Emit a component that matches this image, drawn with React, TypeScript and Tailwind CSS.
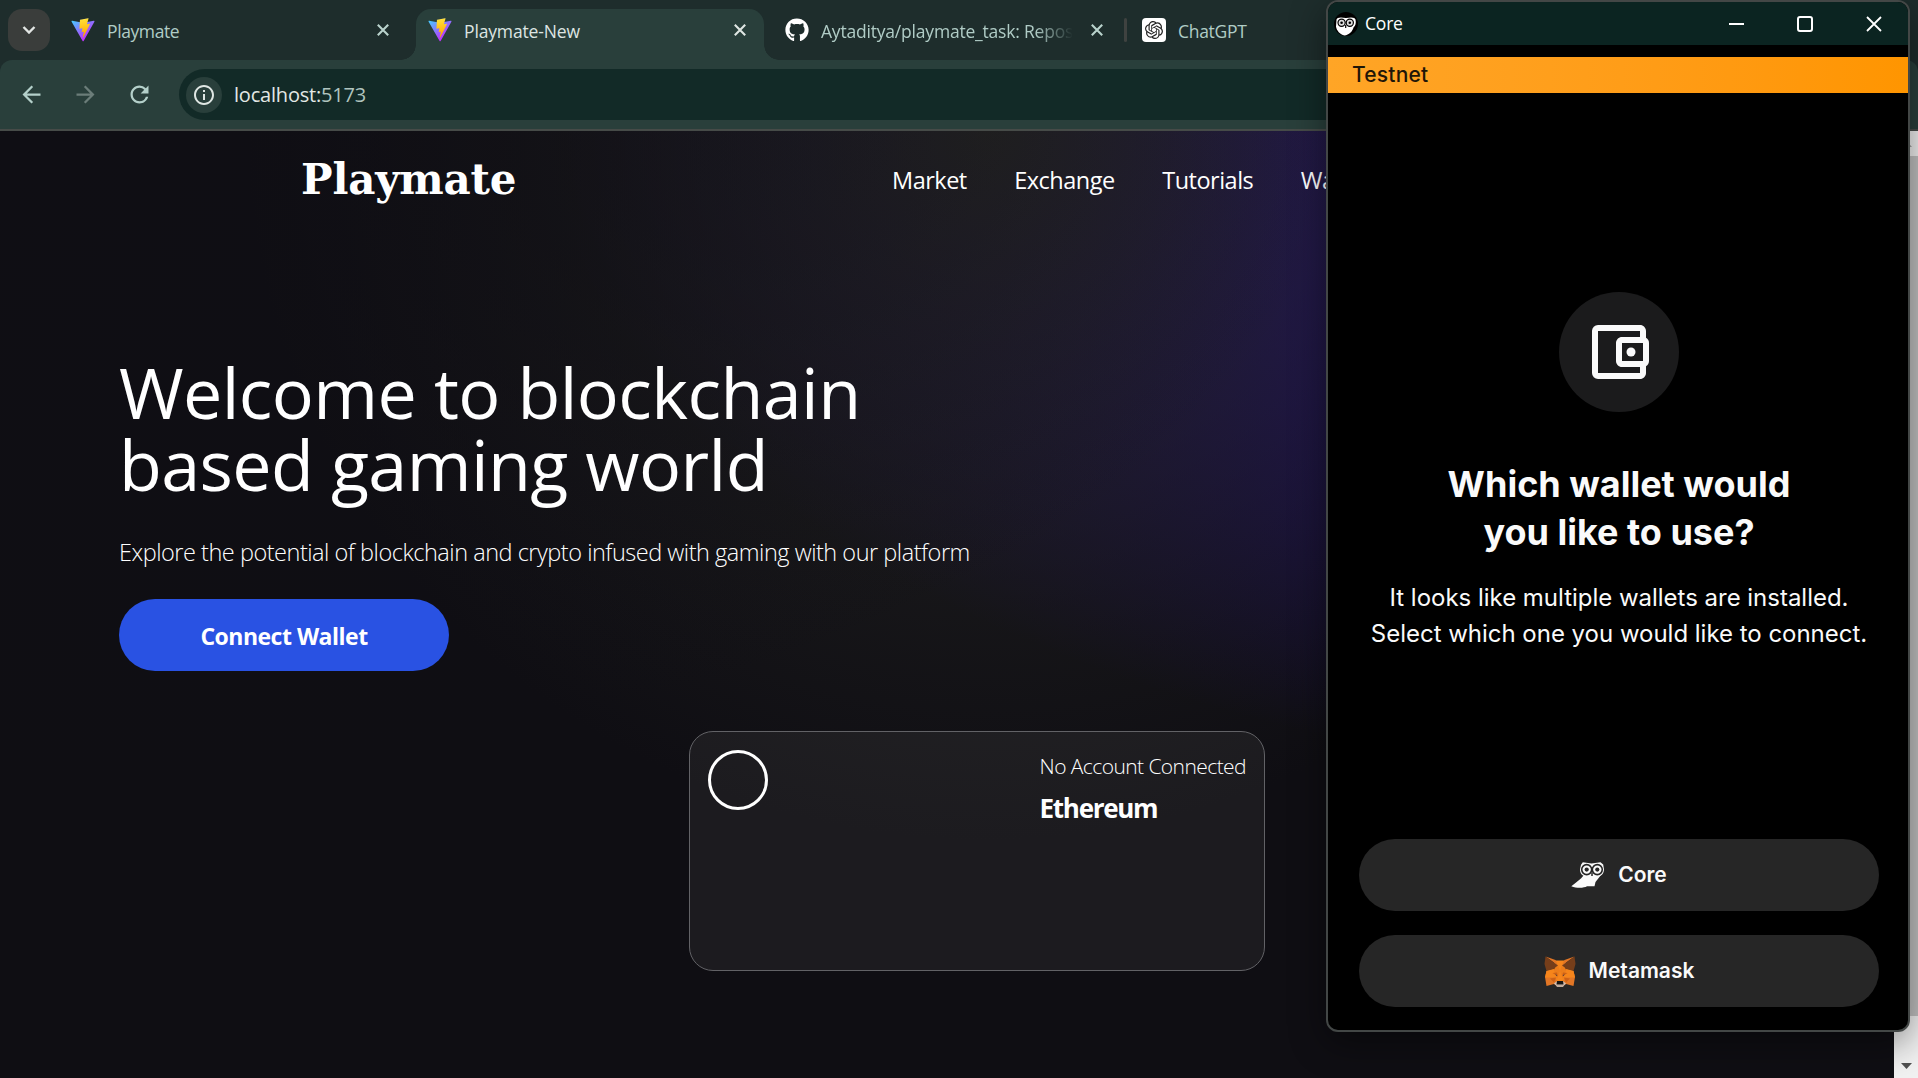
import type { ReactNode } from 'react';
import { MdArrowBack, MdArrowForward, MdInfoOutline, MdOutlineAccountBalanceWallet, MdRefresh } from 'react-icons/md';
import { FaGithub } from 'react-icons/fa';
import { SiOpenai } from 'react-icons/si';

function ViteIcon({ id }: { id: string }) {
  return (
    <svg className="size-6 shrink-0" viewBox="0 0 410 404" fill="none">
      <defs>
        <linearGradient id={`${id}-a`} x1="6" y1="33" x2="235" y2="344" gradientUnits="userSpaceOnUse">
          <stop stopColor="#41D1FF" />
          <stop offset="1" stopColor="#BD34FE" />
        </linearGradient>
        <linearGradient id={`${id}-b`} x1="194.6" y1="8.8" x2="236" y2="293" gradientUnits="userSpaceOnUse">
          <stop stopColor="#FFEA83" />
          <stop offset="0.083" stopColor="#FFDD35" />
          <stop offset="1" stopColor="#FFA800" />
        </linearGradient>
      </defs>
      <path
        fill={`url(#${id}-a)`}
        d="M399.641 59.525L215.643 388.545C211.844 395.338 202.084 395.378 198.228 388.618L10.582 59.556C6.381 52.19 12.68 43.267 21.028 44.759L205.223 77.682C206.398 77.892 207.601 77.89 208.776 77.676L389.119 44.806C397.439 43.289 403.768 52.143 399.641 59.525Z"
      />
      <path
        fill={`url(#${id}-b)`}
        d="M292.965 1.574L156.801 28.255C154.563 28.694 152.906 30.591 152.771 32.867L144.395 174.33C144.198 177.662 147.258 180.248 150.51 179.498L188.42 170.749C191.967 169.931 195.172 173.055 194.443 176.622L183.18 231.775C182.422 235.487 185.907 238.661 189.532 237.56L212.947 230.446C216.577 229.344 220.065 232.527 219.297 236.242L201.398 322.875C200.278 328.294 207.486 331.249 210.492 326.603L212.5 323.5L323.454 102.072C325.312 98.365 322.108 94.137 318.036 94.923L279.014 102.454C275.347 103.161 272.227 99.746 273.262 96.158L298.731 7.867C299.767 4.273 296.636 0.855 292.965 1.574Z"
      />
    </svg>
  );
}

function CloseGlyph({ className }: { className: string }) {
  return (
    <svg className={`size-3 shrink-0 ${className}`} viewBox="0 0 12 12" stroke="currentColor" strokeWidth="2.1">
      <path d="M0.8 0.8L11.2 11.2M11.2 0.8L0.8 11.2" />
    </svg>
  );
}

function TabLabel({ children, className }: { children: ReactNode; className: string }) {
  return <span className={`mt-[2px] text-[17.5px] leading-6 whitespace-nowrap ${className}`}>{children}</span>;
}

function OwlIcon() {
  return (
    <svg className="h-[26px] w-[34px]" viewBox="0 0 34 26">
      <path fill="#fafafa" d="M12.5 13.5C10 17 5 20.500 0.300 24.200C6 26.400 13 26 16 24.200L23.500 24.200L24.500 20L30 13Z" />
      <path fill="#fafafa" d="M11.800 0.200L20.500 1.400L29.500 0.200L32.200 2.500L33 7.500C32.800 12 30 14.600 26 14.600L15.500 14.600C11.500 14.400 9 11.500 9 7.500L10 2.800Z" />
      <circle cx="15.700" cy="7.600" r="5" fill="none" stroke="#262626" strokeWidth="1.600" />
      <circle cx="26.300" cy="7.600" r="5" fill="none" stroke="#262626" strokeWidth="1.600" />
      <circle cx="15.700" cy="7.600" r="2.100" fill="#262626" />
      <circle cx="26.300" cy="7.600" r="2.100" fill="#262626" />
      <path d="M21 10.500V14" stroke="#262626" strokeWidth="1.500" />
    </svg>
  );
}

function OwlBadge() {
  return (
    <svg className="size-6" viewBox="0 0 24 24">
      <ellipse cx="12" cy="12" rx="12" ry="12" fill="#000" />
      <path fill="#fff" d="M2.500 7.500C3 5.500 6 4.800 12 6C18 4.800 21 5.500 21.500 7.500C22.300 11 21.500 14 19.500 15.500C18.500 19.500 15 23 10.500 23.500C6 22.500 2.500 18.500 2 14.500Z" />
      <circle cx="7.600" cy="10.800" r="3.600" fill="#ddd" stroke="#000" strokeWidth="1.200" />
      <circle cx="15.800" cy="10.800" r="3.600" fill="#ddd" stroke="#000" strokeWidth="1.200" />
      <circle cx="7.600" cy="10.800" r="1.300" fill="#000" />
      <circle cx="15.800" cy="10.800" r="1.300" fill="#000" />
      <path d="M11.700 13V16" stroke="#000" strokeWidth="1.200" />
    </svg>
  );
}

function FoxIcon() {
  return (
    <svg className="h-[31px] w-8" viewBox="0 0 64 62">
      <path fill="#E27625" d="M2 42L5 60L20 56L26 60H38L44 56L59 60L62 42L59 30L32 24L5 30Z" />
      <path fill="#F6851B" d="M20 9H44L41 42L38 52H26L23 42Z" />
      <path fill="#E27625" d="M3 1L28 19L23 8Z" />
      <path fill="#E27625" d="M61 1L36 19L41 8Z" />
      <path fill="#763E1A" d="M3 1L1 16L5 30L19 26L28 19Z" />
      <path fill="#763E1A" d="M61 1L63 16L59 30L45 26L36 19Z" />
      <path fill="#F6851B" d="M5 30L19 26L27 30L24 43L2 43Z" />
      <path fill="#F6851B" d="M59 30L45 26L37 30L40 43L62 43Z" />
      <path fill="#E2761B" d="M19 26L28 19L32 30L26 46Z" opacity="0.500" />
      <path fill="#E2761B" d="M45 26L36 19L32 30L38 46Z" opacity="0.500" />
      <path fill="#CD6116" d="M17 34L26 33L28 41ZM47 34L38 33L36 41Z" />
      <path fill="#233447" d="M22 37L26 38L26 40ZM42 37L38 38L38 40Z" />
      <path fill="#CD6116" d="M12 45L24 43L20 53ZM52 45L40 43L44 53Z" />
      <path fill="#D5BFB2" d="M20 55L25 51H39L44 55L38 61H26Z" />
      <path fill="#161616" d="M26 50H38L39 57H25Z" />
      <path fill="#C0AC9D" d="M24 58H40L38 62H26Z" />
    </svg>
  );
}

function BrowserChrome() {
  return (
    <div className="flex h-[131px] shrink-0 flex-col bg-[#1e2d2c]">
      <div className="flex h-[60px] items-center pl-2">
        <div className="flex size-[42px] items-center justify-center rounded-[14px] bg-[#3a3d3b]">
          <svg className="h-2 w-3.5" viewBox="0 0 14 8" fill="none" stroke="#e3e6e4" strokeWidth="2.400">
            <path d="M1.500 1L7 6.500L12.500 1" />
          </svg>
        </div>
        <div className="flex w-[366px] items-center pr-[27px] pl-[21px]">
          <ViteIcon id="tab1" />
          <TabLabel className="ml-3 flex-1 tracking-[-0.400px] text-[#b0ccc6]">Playmate</TabLabel>
          <CloseGlyph className="text-[#b9d2cc]" />
        </div>
        <div className="relative mt-[9px] flex h-[51px] w-[348px] items-center rounded-t-[15px] bg-[#293f3b] pr-[18px] pb-[9px] pl-3">
          <span className="absolute bottom-0 -left-[15px] size-[15px] bg-[radial-gradient(circle_at_0_0,transparent_14.500px,#293f3b_15px)]" />
          <span className="absolute -right-[15px] bottom-0 size-[15px] bg-[radial-gradient(circle_at_100%_0,transparent_14.500px,#293f3b_15px)]" />
          <ViteIcon id="tab2" />
          <TabLabel className="ml-3 flex-1 tracking-[-0.150px] text-[#dde5e2]">Playmate-New</TabLabel>
          <CloseGlyph className="text-[#dfe6e3]" />
        </div>
        <div className="flex w-[360px] items-center pr-[21px] pl-[21px]">
          <FaGithub className="size-6 shrink-0 text-white" />
          <TabLabel className="ml-3 w-[252px] overflow-hidden tracking-[-0.200px] text-[#b0ccc6] [mask-image:linear-gradient(to_right,black_85%,transparent)]">
            Aytaditya/playmate_task: Repos
          </TabLabel>
          <CloseGlyph className="ml-[18px] text-[#b9d2cc]" />
        </div>
        <span className="h-6 w-[3px] rounded-full bg-[#3f4240]" />
        <span className="ml-[15px] flex size-6 items-center justify-center rounded bg-white">
          <SiOpenai className="size-[18px] text-[#222]" />
        </span>
        <TabLabel className="ml-3 tracking-[-0.300px] text-[#b0ccc6]">ChatGPT</TabLabel>
      </div>
      <div className="flex h-[71px] items-center rounded-t-[12px] border-b-2 border-[#464b48] bg-[#293f3b] pl-[18px] text-[#b4d0ca]">
        <MdArrowBack className="size-[27px]" />
        <MdArrowForward className="ml-[27px] size-[27px] text-[#6b7d79]" />
        <MdRefresh className="ml-[27px] size-[27px]" />
        <div className="ml-[26px] flex h-[51px] flex-1 items-center rounded-l-full bg-[#122a27] pl-[7px]">
          <span className="flex size-9 items-center justify-center rounded-full bg-[#293f3b]">
            <MdInfoOutline className="size-6 text-[#dfe6e3]" />
          </span>
          <span className="ml-3 text-xl tracking-[-0.200px] text-[#e2e8e5]">
            localhost:<span className="text-[#b0c4bf]">5173</span>
          </span>
        </div>
        <div className="w-24" />
      </div>
    </div>
  );
}

function Page() {
  return (
    <div className="flex min-h-0 flex-1">
      <main className="flex-1 bg-[#0f0e13] bg-[radial-gradient(at_0%_0%,#0f0e14_0,transparent_50%),radial-gradient(at_52%_0%,#242423_0,transparent_53%),radial-gradient(at_100%_0%,#2909b3_0,transparent_50%)]">
        <header className="flex h-[98px] items-center pl-[301px] text-white">
          <div className="w-[591px] font-['DejaVu_Serif'] text-[42px] leading-none font-bold tracking-[-0.200px]">Playmate</div>
          <nav className="mt-[2px] flex gap-[47.500px] text-[23.500px] tracking-[-0.500px]">
            <span>Market</span>
            <span>Exchange</span>
            <span>Tutorials</span>
            <span>Wallets</span>
          </nav>
        </header>
        <section className="px-[119px] pt-[127px] text-white">
          <h1 className="text-[70px] leading-[73px] tracking-[-0.580px]">
            <span className="block">Welcome to blockchain</span>
            <span className="-mt-px block">based gaming world</span>
          </h1>
          <p className="mt-[33px] text-[23.500px] leading-9 font-light tracking-[-0.480px]">
            Explore the potential of blockchain and crypto infused with gaming with our platform
          </p>
          <button className="mt-[29px] flex h-[72px] w-[330px] items-center justify-center rounded-full bg-[#2952e3] pt-[3px] text-[23px] font-bold tracking-[-0.500px]">
            Connect Wallet
          </button>
          <div className="mt-[60px] ml-[570px] flex h-60 w-[576px] items-start justify-between rounded-3xl border border-[#626266] bg-white/[0.055] p-[18px]">
            <div className="size-[60px] rounded-full border-[3px] border-white" />
            <div className="mt-px">
              <p className="text-[21px] leading-[30px] font-light tracking-[-0.570px]">No Account Connected</p>
              <p className="mt-[9px] text-[26px] leading-9 font-bold tracking-[-1.300px]">Ethereum</p>
            </div>
          </div>
        </section>
      </main>
      <div className="flex w-6 flex-col items-center bg-[#f1f1f1]">
        <div className="flex h-[25px] items-center">
          <svg className="h-1.5 w-[11px]" viewBox="0 0 11 6">
            <path d="M0 6L5.500 0L11 6Z" fill="#a3a3a3" />
          </svg>
        </div>
        <div className="h-[860px] w-full bg-[#c1c1c1]" />
        <div className="flex flex-1 items-end pb-[9px]">
          <svg className="h-1.5 w-[11px]" viewBox="0 0 11 6">
            <path d="M0 0L5.500 6L11 0Z" fill="#505050" />
          </svg>
        </div>
      </div>
    </div>
  );
}

function WalletWindow() {
  return (
    <div className="absolute top-0 left-[1326px] flex h-[1032px] w-[584px] flex-col overflow-hidden rounded-xl border-2 border-[#434746] bg-black font-['Inter'] text-[#fafafa] shadow-[0_10px_36px_rgba(0,0,0,0.450)]">
      <div className="flex h-[43px] items-center bg-[#0b2421] pl-1.5 text-white">
        <OwlBadge />
        <span className="mb-px ml-[7px] flex-1 font-['Open_Sans'] text-[17.500px] leading-6 tracking-[-0.200px]">Core</span>
        <div className="flex items-center gap-[53px] pr-[26px]">
          <span className="h-0.5 w-[15px] bg-white" />
          <span className="size-4 rounded-[3px] border-2 border-white" />
          <svg className="size-4" viewBox="0 0 16 16" stroke="white" strokeWidth="1.800">
            <path d="M1 1L15 15M15 1L1 15" />
          </svg>
        </div>
      </div>
      <div className="mt-3 flex h-9 items-center bg-linear-to-r from-[#ffa526] to-[#ff9500] pl-6 text-[21px] font-medium tracking-[0.200px] text-[#1f1608]">
        Testnet
      </div>
      <div className="flex flex-1 flex-col items-center pt-[199px] pr-[29px] pb-[23px] pl-[31px]">
        <div className="flex size-[120px] items-center justify-center rounded-full bg-[#1b1b1c]">
          <MdOutlineAccountBalanceWallet className="size-[72px]" />
        </div>
        <h2 className="mt-12 text-center text-4xl leading-[48px] font-bold">
          Which wallet would
          <br />
          you like to use?
        </h2>
        <p className="mt-6 text-center text-2xl leading-9 tracking-[-0.020px] whitespace-nowrap">
          It looks like multiple wallets are installed.
          <br />
          Select which one you would like to connect.
        </p>
        <div className="mt-auto flex w-full flex-col gap-6 text-[21px] font-semibold">
          <button className="flex h-[72px] items-center justify-center gap-[13px] rounded-full bg-[#262626]">
            <OwlIcon />
            Core
          </button>
          <button className="flex h-[72px] items-center justify-center gap-[13px] rounded-full bg-[#262626]">
            <FoxIcon />
            Metamask
          </button>
        </div>
      </div>
    </div>
  );
}

export default function App() {
  return (
    <div className="relative flex h-[1078px] w-[1918px] flex-col overflow-hidden font-['Open_Sans',sans-serif]">
      <BrowserChrome />
      <Page />
      <WalletWindow />
    </div>
  );
}
